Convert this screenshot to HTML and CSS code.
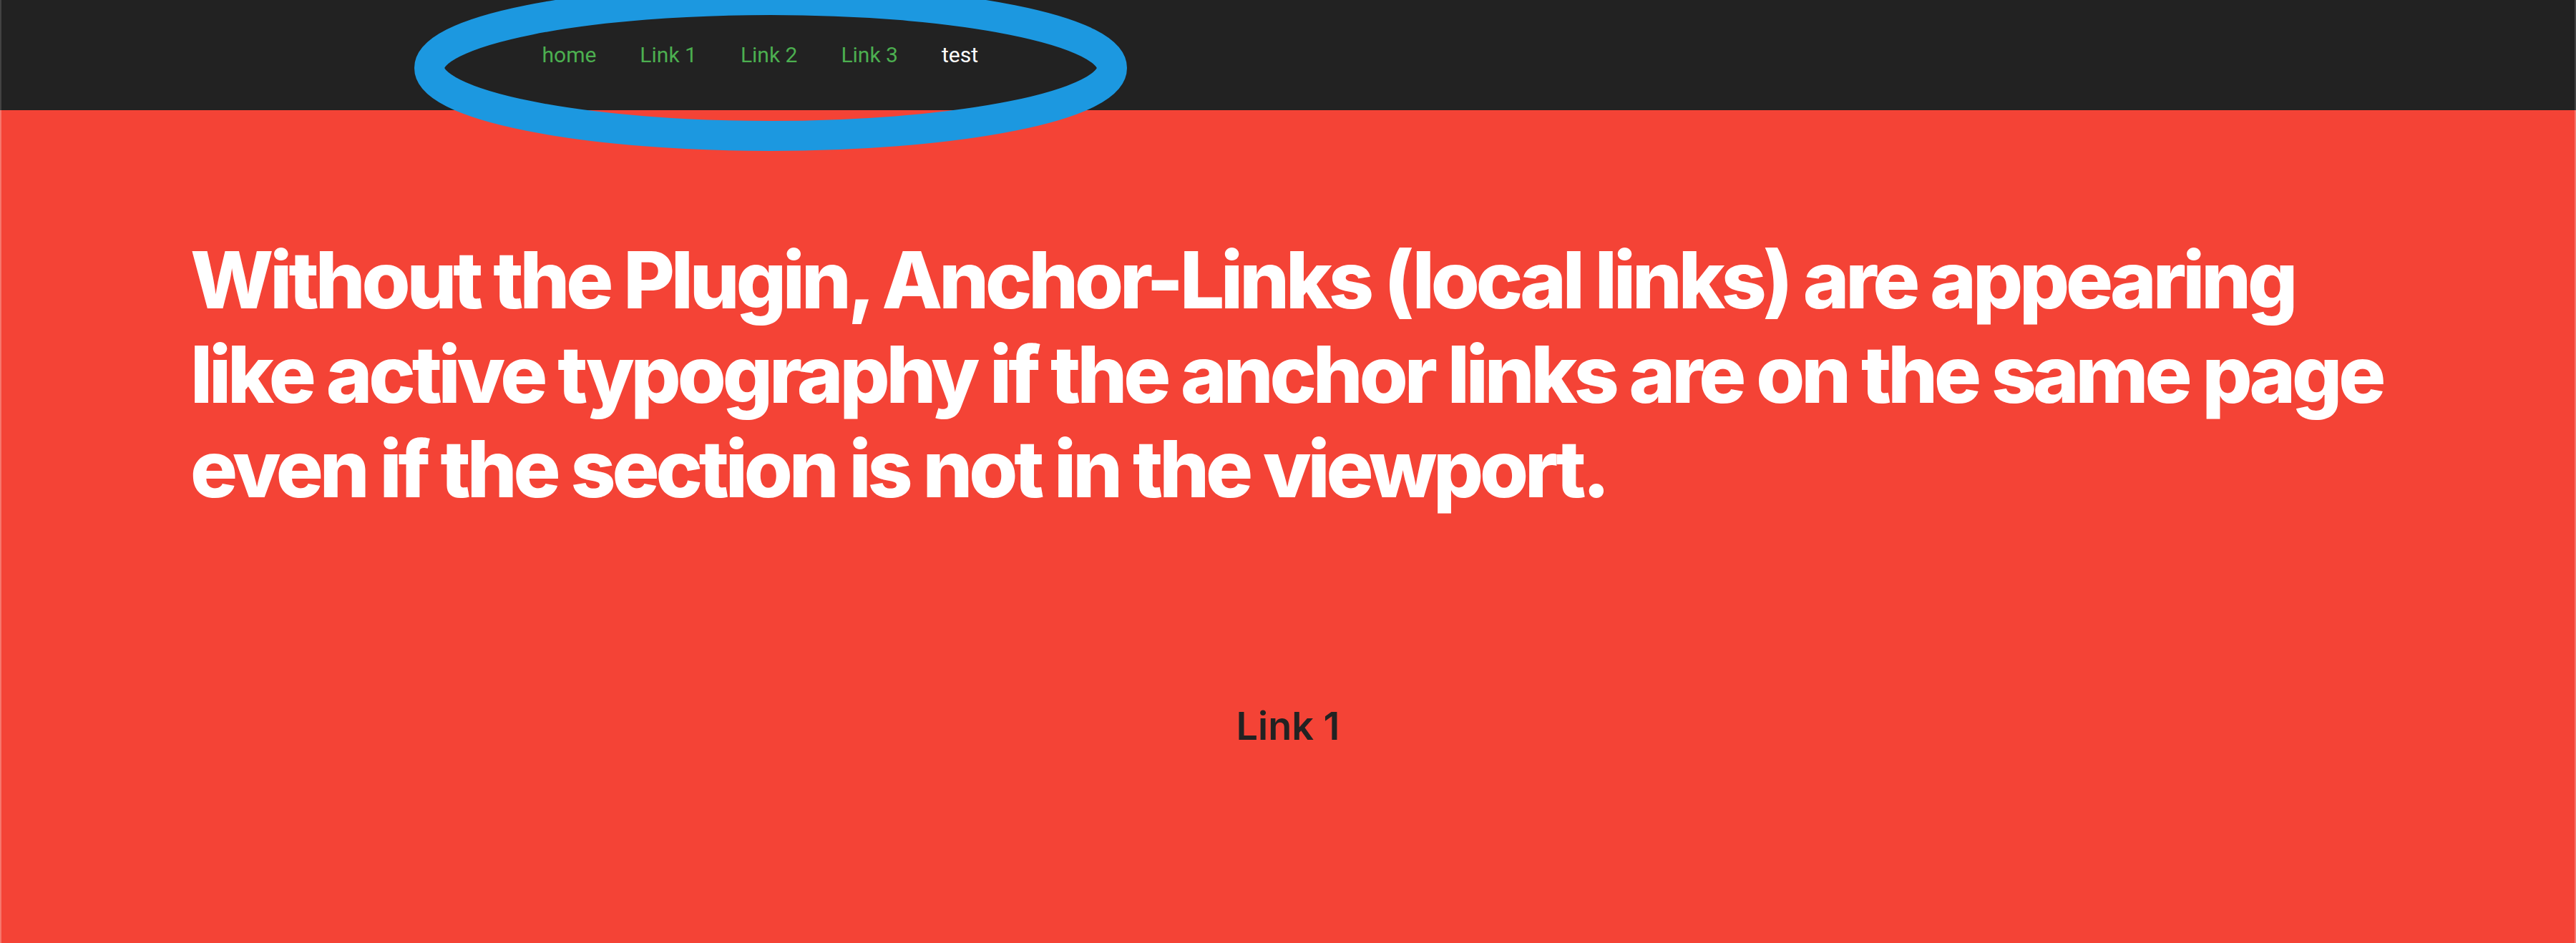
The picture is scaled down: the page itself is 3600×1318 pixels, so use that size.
FILE: index.html
```html
<!DOCTYPE html>
<html lang="en">
<head>
<meta charset="utf-8">
<title>Anchor links</title>
<link rel="stylesheet" href="styles.css">
</head>
<body>
<div class="frame">
  <nav class="topnav">
    <a class="nav-link" href="#home">home</a>
    <a class="nav-link" href="#link1">Link 1</a>
    <a class="nav-link" href="#link2">Link 2</a>
    <a class="nav-link" href="#link3">Link 3</a>
    <a class="nav-link nav-link--plain" href="/test">test</a>
  </nav>
  <main class="content">
    <h1 class="headline">Without the Plugin, Anchor-Links (local links) are appearing<br>like active typography if the anchor links are on the same page<br>even if the section is not in the viewport.</h1>
    <h2 class="section-title" id="link1">Link 1</h2>
  </main>
  <svg class="annotation" width="1200" height="260" viewBox="0 0 1200 260" aria-hidden="true">
    <ellipse cx="517" cy="95" rx="477" ry="95" fill="none" stroke="#1c98e0" stroke-width="42"/>
  </svg>
</div>
</body>
</html>
```

FILE: styles.css
```css
html, body {
  margin: 0;
  padding: 0;
}
body {
  background: #f44336;
  font-family: Inter, "Noto Sans", sans-serif;
  overflow: hidden;
}
.frame {
  position: relative;
  min-height: 1318px;
  border-left: 2px solid rgba(255, 255, 255, 0.15);
  border-right: 2px solid rgba(255, 255, 255, 0.15);
  box-sizing: border-box;
}
.topnav {
  height: 154px;
  background: #222222;
  display: flex;
  align-items: center;
  padding-left: 727px;
  margin-left: -2px;
  margin-right: -2px;
  position: relative;
}
.frame::before,
.frame::after {
  content: "";
  position: absolute;
  top: 0;
  bottom: 0;
  width: 2px;
  background: rgba(255, 255, 255, 0.15);
  z-index: 1;
}
.frame::before { left: -2px; }
.frame::after { right: -2px; }
.nav-link {
  font-family: Roboto, "Liberation Sans", sans-serif;
  font-size: 30px;
  color: #4caf50;
  text-decoration: none;
  padding: 0 30.5px;
  line-height: 1;
}
.nav-link--plain {
  color: #ffffff;
}
.content {
  padding: 171px 0 0 264px;
}
.headline {
  margin: 0;
  font-size: 110px;
  line-height: 132px;
  font-weight: 800;
  color: #ffffff;
  letter-spacing: -5.1px;
}
.section-title {
  margin: 261px 0 0 -264px;
  text-align: center;
  font-size: 54px;
  font-weight: 600;
  color: #222222;
  line-height: normal;
}
.annotation {
  position: absolute;
  left: 558px;
  top: 0;
  z-index: 2;
}
```
